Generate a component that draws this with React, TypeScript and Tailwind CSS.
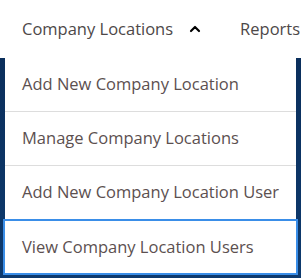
import { ChevronUp } from "lucide-react";

const items = [
  "Add New Company Location",
  "Manage Company Locations",
  "Add New Company Location User",
];

export default function App() {
  return (
    <div
      className="w-[301px] h-[278px] overflow-hidden bg-white"
      style={{ fontFamily: '"Open Sans", "Liberation Sans", sans-serif' }}
    >
      <div className="h-[58px] flex items-center gap-[37px] pl-[22px] text-[16.5px] text-[#4d4848] whitespace-nowrap">
        <div className="flex items-center gap-[14px]">
          <span>Company Locations</span>
          <ChevronUp className="w-[16px] h-[16px] text-black" strokeWidth={3.2} />
        </div>
        <span>Reports</span>
      </div>
      <div className="h-[220px] bg-gradient-to-b from-[#0b2f5c] to-[#0d3a6e] px-[5px]">
        <div className="bg-white">
          {items.map((t) => (
            <div
              key={t}
              className="h-[54px] flex items-center pl-[17px] border-b border-[#dddddd] text-[16.5px] text-[#5c5050] whitespace-nowrap"
            >
              {t}
            </div>
          ))}
        </div>
        <div className="relative -mx-[2px] h-[56px] -mt-[1px] border-2 border-[#3a8ee8] bg-white flex items-center pl-[17px] text-[16.5px] text-[#5c5050] whitespace-nowrap">
          View Company Location Users
        </div>
      </div>
    </div>
  );
}
